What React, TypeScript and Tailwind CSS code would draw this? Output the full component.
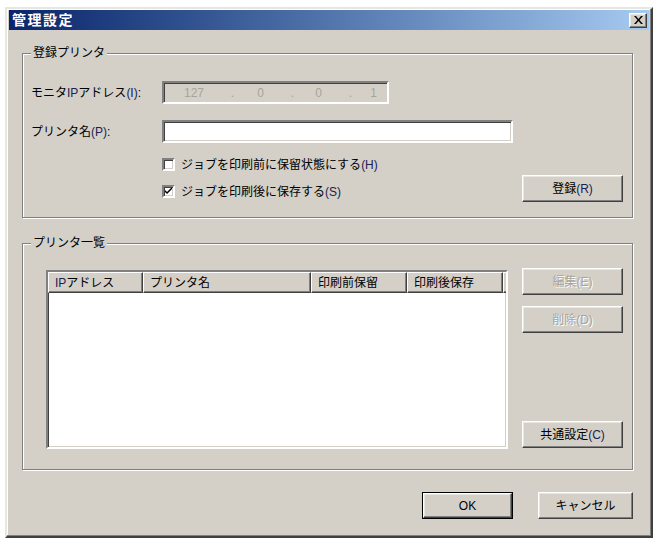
import React from 'react';

const FONT = "font-['Liberation_Sans','Noto_Sans_CJK_JP',sans-serif]";

// classic 3D edges
const raised =
  'border border-t-white border-l-white border-b-[#404040] border-r-[#404040] shadow-[inset_-1px_-1px_0_#808080,inset_1px_1px_0_#e8e6e0]';
const sunken =
  'border-2 border-t-[#808080] border-l-[#808080] border-b-white border-r-white shadow-[inset_1px_1px_0_#404040,inset_-1px_-1px_0_#d4d0c8]';

function Mn({ children }: { children: React.ReactNode }) {
  return <span className="text-[#1a2154]">{children}</span>;
}

function Button({
  children,
  disabled,
  primary,
  className = '',
}: {
  children: React.ReactNode;
  disabled?: boolean;
  primary?: boolean;
  className?: string;
}) {
  const inner = (
    <div
      className={`${raised} flex h-full w-full items-center justify-center bg-[#d4d0c8] text-[12px] ${
        disabled ? 'text-[#a8a49c] [text-shadow:1px_1px_0_#ffffff]' : 'text-black'
      }`}
    >
      {children}
    </div>
  );
  if (primary) {
    return <div className={`border border-black ${className}`}>{inner}</div>;
  }
  return <div className={className}>{inner}</div>;
}

function GroupBox({
  title,
  className = '',
  children,
}: {
  title: string;
  className?: string;
  children: React.ReactNode;
}) {
  return (
    <div
      className={`relative border border-[#808080] shadow-[inset_1px_1px_0_#ffffff,1px_1px_0_#ffffff] ${className}`}
    >
      <span className="absolute left-[8px] top-[-9px] bg-[#d4d0c8] px-[2px] text-[12px] leading-[16px] text-black">
        {title}
      </span>
      {children}
    </div>
  );
}

function Checkbox({ checked }: { checked?: boolean }) {
  return (
    <div className={`${sunken} flex h-[13px] w-[13px] items-center justify-center bg-white`}>
      {checked && (
        <svg width="7" height="7" viewBox="0 0 7 7">
          <path d="M0 2 L0 4 L2 6 L7 1 L7 -1 L2 4 Z" fill="#000" />
        </svg>
      )}
    </div>
  );
}

const headerCell =
  'flex h-full shrink-0 items-center border-r border-b border-r-[#404040] border-b-[#404040] border-t border-l border-t-white border-l-white shadow-[inset_-1px_-1px_0_#808080] pl-[6px] text-[12px] text-black';

export default function App() {
  return (
    <div className={`min-h-[543px] w-[660px] bg-white pt-[7px] ${FONT}`}>
      <div className="ml-[5px] h-[531px] w-[648px] border-2 border-t-[#e8e6e0] border-l-[#e8e6e0] border-b-[#404040] border-r-[#404040] bg-[#d4d0c8] px-[2px] pt-[1px] shadow-[inset_-1px_-1px_0_#808080,inset_1px_1px_0_#ffffff]">
        {/* Title bar */}
        <div className="flex h-[20px] items-center justify-between bg-gradient-to-r from-[#0a246a] to-[#a6caf0] pl-[3px] pr-[2px]">
          <span className="text-[14px] font-bold leading-none tracking-[1.5px] text-white">管理設定</span>
          <div className={`${raised} flex h-[15px] w-[18px] items-center justify-center bg-[#d4d0c8]`}>
            <svg width="9" height="8" viewBox="0 0 9 8">
              <path d="M0 0h2l2.5 3 2.5-3h2L5.5 4 9 8H7L4.5 5 2 8H0l3.5-4z" fill="#000" />
            </svg>
          </div>
        </div>

        {/* 登録プリンタ */}
        <GroupBox title="登録プリンタ" className="ml-[13px] mt-[23px] h-[165px] w-[611px] pt-[27px]">
          <div className="flex h-[23px] items-center">
            <span className="w-[139px] pl-[8px] text-[12px] text-black">
              モニタ<Mn>IP</Mn>アドレス<Mn>(I)</Mn>:
            </span>
            <div className={`${sunken} flex h-[23px] w-[227px] items-center bg-[#d4d0c8] text-[12px] text-[#a8a49c]`}>
              <span className="w-[40px] text-right">127</span>
              <span className="w-[30px] text-right">.</span>
              <span className="w-[30px] text-right">0</span>
              <span className="w-[30px] text-right">.</span>
              <span className="w-[28px] text-right">0</span>
              <span className="w-[30px] text-right">.</span>
              <span className="w-[25px] text-right">1</span>
            </div>
          </div>
          <div className="mt-[16px] flex h-[23px] items-center">
            <span className="w-[139px] pl-[8px] text-[12px] text-black">
              プリンタ名<Mn>(P)</Mn>:
            </span>
            <div className={`${sunken} h-[23px] w-[351px] bg-white`} />
          </div>
          <div className="mt-[14px] flex">
            <div className="ml-[139px] flex w-[360px] flex-col gap-[12px]">
              <div className="flex h-[15px] items-center gap-[6px] text-[12px] text-black">
                <Checkbox />
                <span>
                  ジョブを印刷前に保留状態にする<Mn>(H)</Mn>
                </span>
              </div>
              <div className="flex h-[15px] items-center gap-[6px] text-[12px] text-black">
                <Checkbox checked />
                <span>
                  ジョブを印刷後に保存する<Mn>(S)</Mn>
                </span>
              </div>
            </div>
            <Button className="mt-[18px] h-[27px] w-[101px]">
              登録<Mn>(R)</Mn>
            </Button>
          </div>
        </GroupBox>

        {/* プリンタ一覧 */}
        <GroupBox title="プリンタ一覧" className="ml-[13px] mt-[25px] flex h-[227px] w-[611px]">
          <div className={`${sunken} ml-[23px] mt-[26px] h-[179px] w-[462px] shrink-0 overflow-hidden bg-white`}>
            <div className="flex h-[21px] bg-[#d4d0c8]">
              <div className={`${headerCell} w-[95px]`}>
                <Mn>IP</Mn>アドレス
              </div>
              <div className={`${headerCell} w-[168px]`}>プリンタ名</div>
              <div className={`${headerCell} w-[96px]`}>印刷前保留</div>
              <div className={`${headerCell} w-[96px]`}>印刷後保存</div>
              <div className={`${headerCell} w-[4px] pl-0`} />
            </div>
          </div>
          <div className="ml-[14px] mt-[24px] flex h-[180px] flex-col">
            <Button disabled className="h-[27px] w-[101px]">
              編集(E)
            </Button>
            <Button disabled className="mt-[11px] h-[27px] w-[101px]">
              削除(D)
            </Button>
            <Button className="mt-auto h-[27px] w-[101px]">
              共通設定<Mn>(C)</Mn>
            </Button>
          </div>
        </GroupBox>

        {/* Dialog buttons */}
        <div className="mr-[16px] mt-[22px] flex justify-end gap-[25px]">
          <Button primary className="h-[27px] w-[91px]">
            OK
          </Button>
          <Button className="h-[27px] w-[95px]">キャンセル</Button>
        </div>
      </div>
    </div>
  );
}
